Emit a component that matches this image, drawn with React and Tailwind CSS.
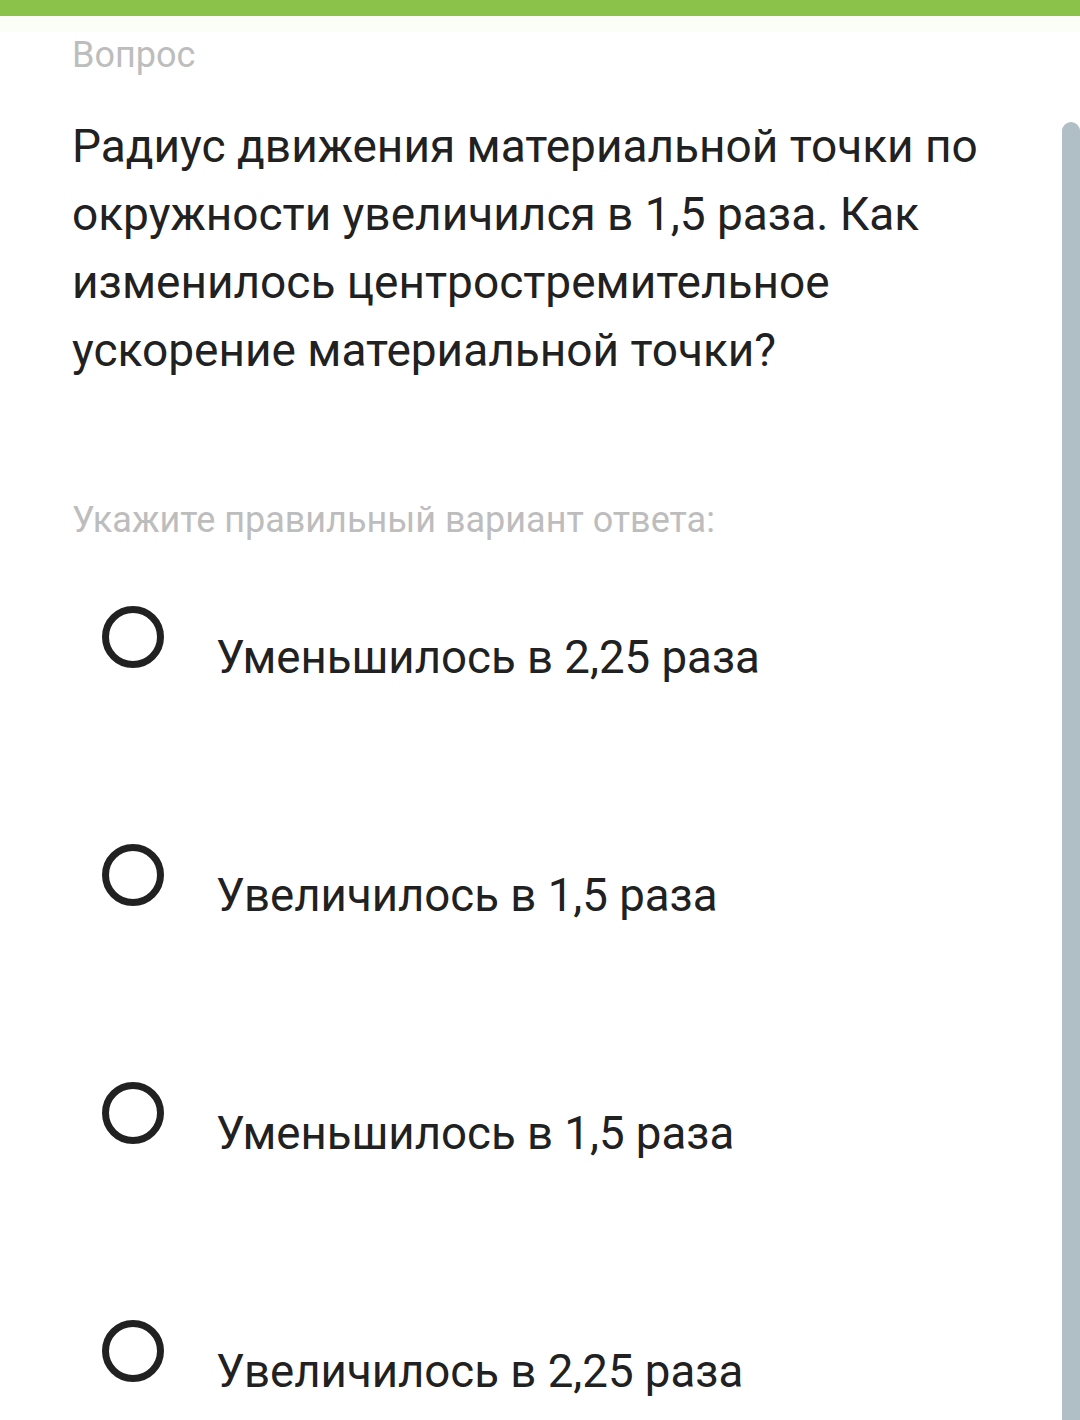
const options = [
  'Уменьшилось в 2,25 раза',
  'Увеличилось в 1,5 раза',
  'Уменьшилось в 1,5 раза',
  'Увеличилось в 2,25 раза',
]

export default function App() {
  return (
    <div className="relative w-[1080px] h-[1420px] overflow-hidden bg-white font-['Roboto',sans-serif]">
      <div className="h-[16px] bg-[#8bc34a]" />
      <div className="h-[16px] bg-[#fbfdf7]" />

      {/* scrollbar */}
      <div className="absolute right-0 top-[122px] bottom-0 w-[18px] rounded-t-full bg-[#b0bec5]" />

      <div className="pl-[72px] pr-[80px]">
        <p className="mt-[3px] text-[36px] leading-[40px] text-[#bdbdbd]">Вопрос</p>

        <p className="mt-[37px] text-[46px] leading-[68px] text-[#212121]">
          Радиус движения материальной точки по окружности увеличился в 1,5 раза. Как изменилось центростремительное ускорение материальной точки?
        </p>

        <p className="mt-[116px] text-[36px] leading-[40px] text-[#bdbdbd]">Укажите правильный вариант ответа:</p>

        <div className="mt-[66px] flex flex-col gap-[176px]">
          {options.map(o => (
            <div key={o} className="flex items-start h-[62px]">
              <div className="ml-[30px] w-[62px] h-[62px] rounded-full border-[7px] border-[#212121] shrink-0" />
              <span className="ml-[52px] mt-[7px] text-[45.6px] leading-[90px] text-[#212121] whitespace-nowrap">{o}</span>
            </div>
          ))}
        </div>
      </div>
    </div>
  )
}
